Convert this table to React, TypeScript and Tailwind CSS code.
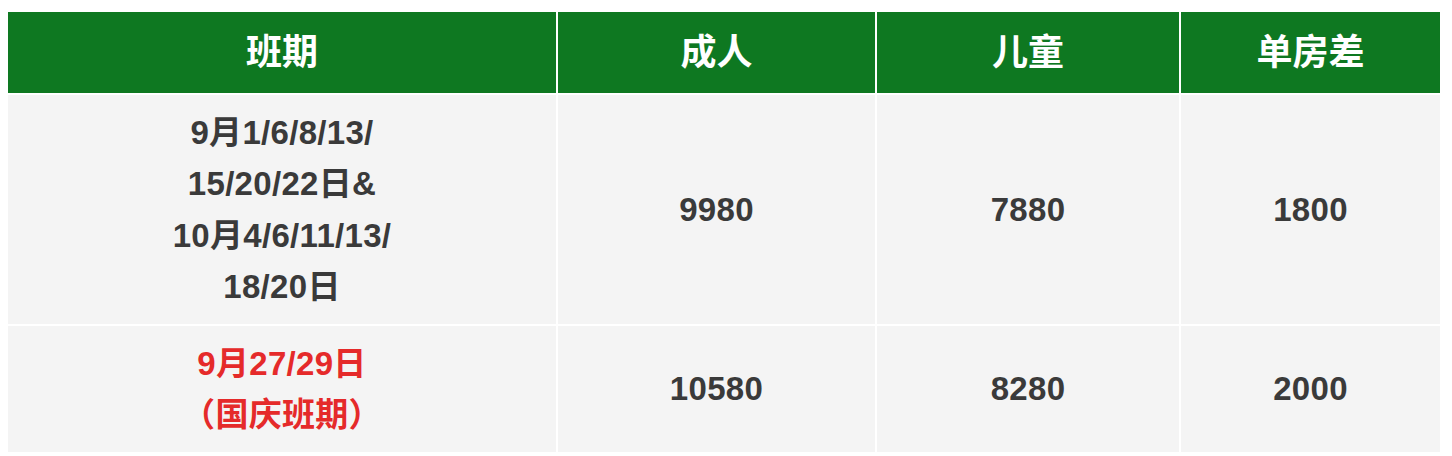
const font = { fontFamily: '"Liberation Sans", "Noto Sans CJK SC", sans-serif' };

interface Row {
  period: string[];
  adult: string;
  child: string;
  single: string;
  highlight?: boolean;
}

const rows: Row[] = [
  {
    period: ["9月1/6/8/13/", "15/20/22日&", "10月4/6/11/13/", "18/20日"],
    adult: "9980",
    child: "7880",
    single: "1800",
  },
  {
    period: ["9月27/29日", "（国庆班期）"],
    adult: "10580",
    child: "8280",
    single: "2000",
    highlight: true,
  },
];

const headers = ["班期", "成人", "儿童", "单房差"];

export default function App() {
  return (
    <div className="w-[1452px] h-[456px] overflow-hidden bg-white pt-[12px] pl-[8px]" style={font}>
      <div className="grid w-[1432px] grid-cols-[548px_317px_302px_259px] gap-[2px] bg-white font-bold">
        {headers.map((h) => (
          <div
            key={h}
            className="flex h-[81px] items-center justify-center bg-[#0e7821] text-[36px] text-white"
          >
            {h}
          </div>
        ))}
        {rows.map((r, i) => (
          <div key={i} className="contents">
            <div
              className={`flex flex-col items-center justify-center bg-[#f4f4f4] py-[11.5px] text-[33px] leading-[51.5px] tracking-[0.3px] ${
                r.highlight ? "text-[#e52a2a]" : "text-[#3a3a3a]"
              }`}
            >
              {r.period.map((line) => (
                <span key={line}>{line}</span>
              ))}
            </div>
            {[r.adult, r.child, r.single].map((v, j) => (
              <div
                key={j}
                className="flex items-center justify-center bg-[#f4f4f4] text-[33px] tracking-[0.3px] text-[#3a3a3a]"
              >
                {v}
              </div>
            ))}
          </div>
        ))}
      </div>
    </div>
  );
}
